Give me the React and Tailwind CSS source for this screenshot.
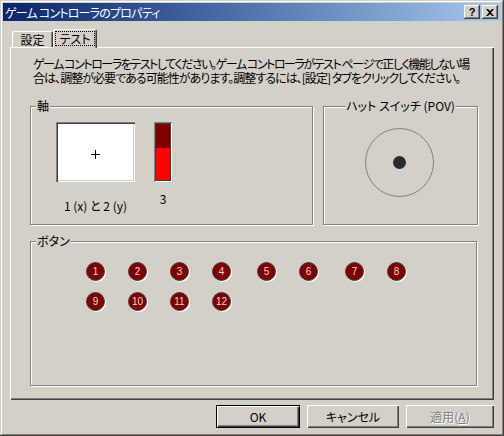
import React from 'react';

// each line carries its own squeeze so the wrap point matches the dialog
const intro = [
  {
    text: 'ゲーム コントローラをテストしてください。ゲーム コントローラがテスト ページで正しく機能しない場',
    fit: 'tracking-[-1.45px]',
  },
  {
    text: '合は、調整が必要である可能性があります。調整するには、[設定] タブをクリックしてください。',
    fit: 'tracking-[-0.95px]',
  },
];

// column widths are the measured steps between the button lamps
const lampRows = [
  [1, 2, 3, 4, 5, 6, 7, 8],
  [9, 10, 11, 12],
];

function GroupBox({ label, centered, className = '', children }) {
  return (
    <div className={`relative border border-[#808080] shadow-[1px_1px_0_#fff,inset_1px_1px_0_#fff] ${className}`}>
      <span
        className={`absolute -top-[8px] bg-[#d4d0c8] px-[1px] leading-[14px] whitespace-nowrap ${
          centered ? 'left-1/2 -translate-x-1/2' : 'left-[5px]'
        }`}
      >
        {label}
      </span>
      {children}
    </div>
  );
}

function Lamp({ n }) {
  return (
    <div className="w-[19px] h-[19px] rounded-full bg-[#800000] border border-[#404040] shadow-[1px_1px_0_#fff] flex items-center justify-center text-[10px] leading-none text-[#e6dada] font-['Liberation_Sans',sans-serif]">
      {n}
    </div>
  );
}

function CaptionButton({ children }) {
  return (
    <div className="w-[16px] h-[14px] bg-[#d4d0c8] shadow-[inset_-1px_-1px_#404040,inset_1px_1px_#fff,inset_-2px_-2px_#808080] flex items-center justify-center">
      {children}
    </div>
  );
}

export default function App() {
  return (
    <div className="w-[504px] h-[436px] bg-[#d4d0c8] p-[3px] flex flex-col text-[12px] leading-[13px] text-black font-['Noto_Sans_CJK_JP',sans-serif] [font-feature-settings:'palt'] shadow-[inset_-1px_-1px_#404040,inset_1px_1px_#d4d0c8,inset_-2px_-2px_#808080,inset_2px_2px_#fff] overflow-hidden">
      {/* title bar */}
      <div className="h-[18px] flex items-center pl-[2px] pr-[3px] bg-linear-to-r from-[#0a246a] to-[#a6caf0]">
        <span className="text-white whitespace-nowrap tracking-[-0.8px]">ゲーム コントローラのプロパティ</span>
        <div className="ml-auto flex gap-[2px]">
          <CaptionButton>
            <span className="font-['Liberation_Sans',sans-serif] font-bold text-[11px] leading-none">?</span>
          </CaptionButton>
          <CaptionButton>
            <svg width="8" height="7" viewBox="0 0 8 7">
              <path d="M0 0h2l2 2 2-2h2L5 3.5 8 7H6L4 5 2 7H0l3-3.5z" fill="#000" />
            </svg>
          </CaptionButton>
        </div>
      </div>

      <div className="flex-1 flex flex-col px-[7px] pt-[8px]">
        {/* tabs */}
        <div className="flex items-end pl-[2px] h-[18px]">
          <div className="w-[41px] h-[16px] rounded-t-[2px] flex items-center justify-center shadow-[inset_1px_1px_#fff,inset_-1px_0_#404040,inset_-2px_0_#808080]">
            設定
          </div>
          <div className="relative z-10 w-[44px] h-[19px] -mb-px rounded-t-[2px] bg-[#d4d0c8] shadow-[inset_1px_1px_#fff,inset_-1px_0_#404040,inset_-2px_0_#808080] pt-[2px] pl-[2px]">
            <div className="w-[40px] h-[15px] border border-dotted border-black flex items-center justify-center">
              テスト
            </div>
          </div>
        </div>

        {/* tab page */}
        <div className="h-[353px] flex flex-col pl-[20px] shadow-[inset_1px_1px_#fff,inset_-1px_-1px_#404040,inset_-2px_-2px_#808080]">
          <div className="mt-[10px] ml-[3px] leading-[14px]">
            {intro.map((line) => (
              <div key={line.text} className={`whitespace-nowrap ${line.fit}`}>{line.text}</div>
            ))}
          </div>

          <div className="flex items-start gap-[10px] mt-[21px]">
            <GroupBox label="軸" className="w-[283px] h-[119px] pl-[25px] pt-[15px]">
              <div className="flex items-start gap-[19px]">
                <div className="flex flex-col items-center">
                  <div className="relative w-[79px] h-[60px] bg-white shadow-[inset_1px_1px_#808080,inset_2px_2px_#404040,inset_-1px_-1px_#fff,inset_-2px_-2px_#d4d0c8]">
                    <div className="absolute left-[35px] top-[28px] w-[9px] h-[9px]">
                      <div className="absolute left-[4px] top-0 w-px h-[9px] bg-black" />
                      <div className="absolute top-[4px] left-0 h-px w-[9px] bg-black" />
                    </div>
                  </div>
                  <div className="mt-[17px] whitespace-nowrap">1 (x) と 2 (y)</div>
                </div>
                <div className="flex flex-col items-center">
                  <div className="w-[18px] h-[60px] p-[2px] flex flex-col shadow-[inset_1px_1px_#808080,inset_-1px_-1px_#fff] bg-[#404040]">
                    <div className="h-[24px] bg-[#800000]" />
                    <div className="flex-1 bg-[#ff0000]" />
                  </div>
                  <div className="mt-[10px]">3</div>
                </div>
              </div>
            </GroupBox>

            <GroupBox label="ハット スイッチ (POV)" centered className="w-[155px] h-[119px] pl-[41px] pt-[21px]">
              <div className="w-[69px] h-[69px] rounded-full border border-[#808080] flex items-center justify-center">
                <div className="w-[13px] h-[13px] rounded-full bg-[#2a2a2a]" />
              </div>
            </GroupBox>
          </div>

          <GroupBox label="ボタン" className="w-[447px] h-[145px] mt-[16px] pl-[55px] pt-[20px]">
            <div className="flex flex-col gap-[11px]">
              {lampRows.map((row, i) => (
                <div key={i} className="grid grid-cols-[42px_42px_42px_45px_42px_46px_42px_42px] justify-items-start">
                  {row.map((n) => (
                    <Lamp key={n} n={n} />
                  ))}
                </div>
              ))}
            </div>
          </GroupBox>
        </div>

        {/* dialog buttons */}
        <div className="flex justify-end gap-[7px] mt-[5px]">
          <button className="w-[84px] h-[23px] border border-black shadow-[inset_1px_1px_#fff,inset_-1px_-1px_#404040,inset_-2px_-2px_#808080] flex items-center justify-center">
            OK
          </button>
          <button className="w-[92px] h-[23px] shadow-[inset_1px_1px_#fff,inset_-1px_-1px_#404040,inset_-2px_-2px_#808080] flex items-center justify-center">
            キャンセル
          </button>
          <button className="w-[88px] h-[23px] shadow-[inset_1px_1px_#fff,inset_-1px_-1px_#404040,inset_-2px_-2px_#808080] flex items-center justify-center text-[#808080] [text-shadow:1px_1px_0_#fff]">
            適用(<span className="underline">A</span>)
          </button>
        </div>
      </div>
    </div>
  );
}
